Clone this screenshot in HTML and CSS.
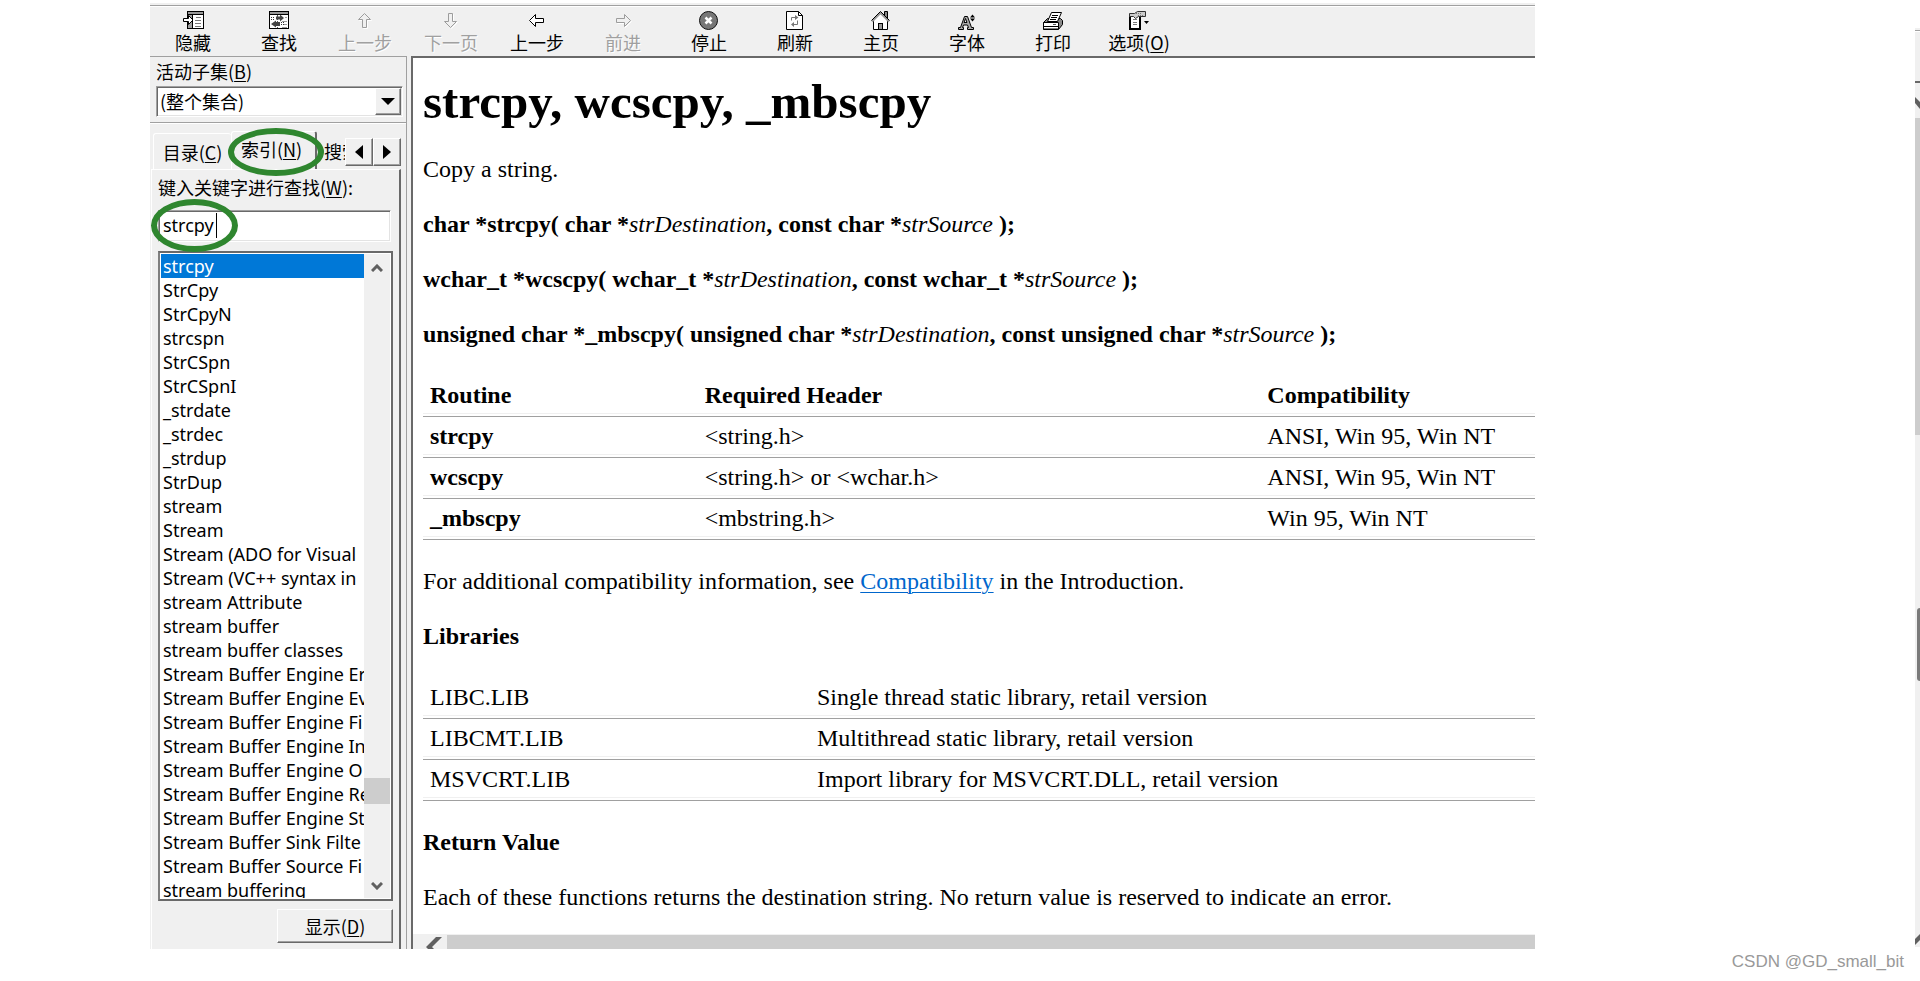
FILE: index.html
```html
<!DOCTYPE html>
<html lang="zh-CN">
<head>
<meta charset="utf-8">
<title>strcpy, wcscpy, _mbscpy</title>
<link rel="stylesheet" href="styles.css">
</head>
<body>
<div class="page">
<div class="stage">
<div class="window">
  <nav class="toolbar" aria-label="工具栏">
    <button class="tool" type="button">
      <svg class="icon" viewBox="0 0 24 20"><path d="M6 1h17v18H6z" fill="#000"/><path d="M7 2h15v2H7z" fill="#999"/><path d="M7 5h4v13H7z" fill="#a0a0a0"/><path d="M12 5h10v13H12z" fill="#fff"/><path d="M15 7.500h5M14 10.500h6M14 13.500h6M14 16h6" stroke="#777" fill="none"/><path class="smooth" d="M2.500 8.500h5v-3l4.500 4.500-4.500 4.500v-3h-5z" fill="#fff" stroke="#000"/></svg>
      <span>隐藏</span></button>
    <button class="tool" type="button">
      <svg class="icon" viewBox="0 0 24 20"><path d="M2 1h20v18H2z" fill="#000"/><path d="M3 2h18v2H3z" fill="#999"/><path d="M3 5h18v13H3z" fill="#fff"/><path d="M4 7.500h4M4 9.500h4M12 12.500h5M12 14.500h5" stroke="#333" stroke-dasharray="1 1"/><path d="M15 11.500h5M17 14.500h3M15 17h5M18 7.500h2" stroke="#999"/><path d="M10.500 5v13" stroke="#555" stroke-dasharray="2 1"/><path class="smooth" d="M9 6.500h4V4.500l4 3.500-4 3.500V9.500H9zM13 12H9v-1.500L4 14l5 3.500V16h4z" fill="#444"/></svg>
      <span>查找</span></button>
    <button class="tool" type="button" disabled>
      <svg class="icon" viewBox="0 0 24 20"><path class="smooth" d="M10.500 18.500v-8h-4l6-6 6 6h-4v8z" fill="none" stroke="#fff"/><path class="smooth" d="M9.500 17.500v-8h-4l6-6 6 6h-4v8z" fill="#f0f0f0" stroke="#9c9c9c"/></svg>
      <span>上一步</span></button>
    <button class="tool" type="button" disabled>
      <svg class="icon" viewBox="0 0 24 20"><path class="smooth" d="M10.500 4.500v8h-4l6 6 6-6h-4v-8z" fill="none" stroke="#fff"/><path class="smooth" d="M9.500 3.500v8h-4l6 6 6-6h-4v-8z" fill="#f0f0f0" stroke="#9c9c9c"/></svg>
      <span>下一页</span></button>
    <button class="tool" type="button">
      <svg class="icon" viewBox="0 0 24 20"><path class="smooth" d="M18.500 8.500h-8v-4l-6 6 6 6v-4h8z" fill="#fff" stroke="#000"/></svg>
      <span>上一步</span></button>
    <button class="tool" type="button" disabled>
      <svg class="icon" viewBox="0 0 24 20"><path class="smooth" d="M6.500 9.500h8v-4l6 6-6 6v-4h-8z" fill="none" stroke="#fff"/><path class="smooth" d="M5.500 8.500h8v-4l6 6-6 6v-4h-8z" fill="#f0f0f0" stroke="#9c9c9c"/></svg>
      <span>前进</span></button>
    <button class="tool" type="button">
      <svg class="icon" viewBox="0 0 24 20"><circle class="smooth" cx="11.500" cy="10.500" r="9" fill="#777" stroke="#111"/><path class="smooth" d="M8.500 7.500l6 6M14.500 7.500l-6 6" stroke="#fff" stroke-width="2.500"/></svg>
      <span>停止</span></button>
    <button class="tool" type="button">
      <svg class="icon" viewBox="0 0 24 20"><path class="smooth" d="M3.500 1.500h12l4 4v14h-16z" fill="#fff" stroke="#000"/><path class="smooth" d="M15.500 1.500v4h4" fill="none" stroke="#000"/><path class="smooth" d="M8.500 10.500V7.500h4M14.500 10.500v4h-4" fill="none" stroke="#777"/><path class="smooth" d="M12 5l3.500 2.500L12 10zM11 12l-3 2.500 3 2.500z" fill="#777"/></svg>
      <span>刷新</span></button>
    <button class="tool" type="button">
      <svg class="icon" viewBox="0 0 24 20"><path class="smooth" d="M15.500 1.500h3v8l-3-3z" fill="#888" stroke="#000"/><path class="smooth" d="M4.500 19.500V10L11.500 3l7 7v9.500z" fill="#fff" stroke="#000"/><path class="smooth" d="M3 11.500l8.500-8.500 8.500 8.500" fill="none" stroke="#999" stroke-width="2"/><path class="smooth" d="M2.500 10.500l9-9 9 9" fill="none" stroke="#000"/><path d="M9.500 19.500v-6h4v6z" fill="#999" stroke="#000"/></svg>
      <span>主页</span></button>
    <button class="tool" type="button">
      <svg class="icon" viewBox="0 0 24 20"><path class="smooth" d="M3.500 19.500v-2h2l4-11h3l4 11h2v2h-6v-2h1l-1-2.500h-4l-1 2.500h1v2zM9 12.500h3l-1.500-4z" fill="#aaa" stroke="#000" fill-rule="evenodd"/><path class="smooth" d="M15 7.500l2.500-3 2.500 3zM15 8.500l2.500 3 2.500-3z" fill="#000"/></svg>
      <span>字体</span></button>
    <button class="tool" type="button">
      <svg class="icon" viewBox="0 0 24 20"><path class="smooth" d="M2.500 12.500l4-4h13l2 2v4l-4 5h-15z" fill="#888" stroke="#000"/><path class="smooth" d="M6.500 11.500l4-9h10l-4 9z" fill="#fff" stroke="#000"/><path class="smooth" d="M11 5.500h6M10 7.500h6M9 9.500h6" stroke="#000"/><path class="smooth" d="M2.500 12.500h15v6.500h-15z" fill="#fff" stroke="#000"/><path d="M3 16.500h14" stroke="#000"/><path d="M12 14.500h3" stroke="#555"/></svg>
      <span>打印</span></button>
    <button class="tool" type="button">
      <svg class="icon" viewBox="0 0 24 20"><path d="M2 4h12v16H2z" fill="#000"/><path d="M4 6h8v12H4z" fill="#fff"/><path d="M6 9.500h4M6 12h4M6 14.500h4" stroke="#777"/><path class="smooth" d="M2.500 6.500v-3h5l3-2h8v5h-7l-3 2-2-2z" fill="#ccc" stroke="#333"/><path d="M9 3.500h6M11 5.500h5" stroke="#777" stroke-dasharray="1 1"/><path class="smooth" d="M17 11h5l-2.500 3z" fill="#000"/></svg>
      <span>选项(<u>O</u>)</span></button>
  </nav>

  <div class="split">
    <aside class="side">
      <div class="subset">
        <label for="subset">活动子集(<u>B</u>)</label>
        <div class="combo">
          <select id="subset"><option>(整个集合)</option></select>
          <span class="drop"><svg viewBox="0 0 14 7"><path d="M0 0h14L7 7z"/></svg></span>
        </div>
      </div>
      <div class="tabs" role="tablist">
        <button class="tab" type="button" role="tab">目录(<u>C</u>)</button>
        <button class="tab active" type="button" role="tab" aria-selected="true">索引(<u>N</u>)<span class="ring ring-tab"></span></button>
        <button class="tab cut" type="button" role="tab">搜索</button>
        <button class="spin" type="button" aria-label="向左"><svg viewBox="0 0 8 14"><path d="M8 0v14L0 7z"/></svg></button>
        <button class="spin" type="button" aria-label="向右"><svg viewBox="0 0 8 14"><path d="M0 0v14l8-7z"/></svg></button>
      </div>
      <section class="panel">
        <label for="keyword">键入关键字进行查找(<u>W</u>):</label>
        <div class="entry">
          <input id="keyword" type="text" value="strcpy">
          <span class="caret"></span>
          <span class="ring ring-entry"></span>
        </div>
        <div class="listbox">
          <ul class="items" role="listbox" aria-label="索引">
            <li class="on" role="option" aria-selected="true">strcpy</li>
            <li role="option">StrCpy</li>
            <li role="option">StrCpyN</li>
            <li role="option">strcspn</li>
            <li role="option">StrCSpn</li>
            <li role="option">StrCSpnI</li>
            <li role="option">_strdate</li>
            <li role="option">_strdec</li>
            <li role="option">_strdup</li>
            <li role="option">StrDup</li>
            <li role="option">stream</li>
            <li role="option">Stream</li>
            <li role="option">Stream (ADO for Visual</li>
            <li role="option">Stream (VC++ syntax in</li>
            <li role="option">stream Attribute</li>
            <li role="option">stream buffer</li>
            <li role="option">stream buffer classes</li>
            <li role="option">Stream Buffer Engine Er</li>
            <li role="option">Stream Buffer Engine Ev</li>
            <li role="option">Stream Buffer Engine Fi</li>
            <li role="option">Stream Buffer Engine In</li>
            <li role="option">Stream Buffer Engine O</li>
            <li role="option">Stream Buffer Engine Re</li>
            <li role="option">Stream Buffer Engine St</li>
            <li role="option">Stream Buffer Sink Filte</li>
            <li role="option">Stream Buffer Source Fi</li>
            <li role="option">stream buffering</li>
          </ul>
          <div class="vbar">
            <svg viewBox="0 0 12 8"><path d="M1 7l5-5 5 5"/></svg>
            <span class="thumb"></span>
            <svg viewBox="0 0 12 8"><path d="M1 1l5 5 5-5"/></svg>
          </div>
        </div>
        <button class="show" type="button">显示(<u>D</u>)</button>
      </section>
    </aside>

    <main class="view">
      <article class="doc">
        <h1>strcpy, wcscpy, _mbscpy</h1>
        <p>Copy a string.</p>
        <p><b>char *strcpy( char *</b><i>strDestination</i><b>, const char *</b><i>strSource</i> <b>);</b></p>
        <p><b>wchar_t *wcscpy( wchar_t *</b><i>strDestination</i><b>, const wchar_t *</b><i>strSource</i> <b>);</b></p>
        <p><b>unsigned char *_mbscpy( unsigned char *</b><i>strDestination</i><b>, const unsigned char *</b><i>strSource</i> <b>);</b></p>
        <table class="routines">
          <thead><tr><th>Routine</th><th>Required Header</th><th>Compatibility</th></tr></thead>
          <tbody>
            <tr><td><b>strcpy</b></td><td>&lt;string.h&gt;</td><td>ANSI, Win 95, Win NT</td></tr>
            <tr><td><b>wcscpy</b></td><td>&lt;string.h&gt; or &lt;wchar.h&gt;</td><td>ANSI, Win 95, Win NT</td></tr>
            <tr><td><b>_mbscpy</b></td><td>&lt;mbstring.h&gt;</td><td>Win 95, Win NT</td></tr>
          </tbody>
        </table>
        <p>For additional compatibility information, see <a href="#compat">Compatibility</a> in the Introduction.</p>
        <h2>Libraries</h2>
        <table class="libs">
          <tbody>
            <tr><td>LIBC.LIB</td><td>Single thread static library, retail version</td></tr>
            <tr><td>LIBCMT.LIB</td><td>Multithread static library, retail version</td></tr>
            <tr><td>MSVCRT.LIB</td><td>Import library for MSVCRT.DLL, retail version</td></tr>
          </tbody>
        </table>
        <h2>Return Value</h2>
        <p>Each of these functions returns the destination string. No return value is reserved to indicate an error.</p>
      </article>
      <div class="hbar">
        <svg viewBox="0 0 16 24"><path d="M10 0h6L6 10l10 10h-6L0 10z"/></svg>
        <span class="hthumb"></span>
      </div>
    </main>
  </div>
</div>

<div class="edge">
  <div class="edge-bar"></div>
  <svg class="edge-arrow" viewBox="0 0 5 35"><path d="M0 14l5 5v7l-5-6z"/></svg>
  <div class="edge-thumb"></div>
  <div class="edge-knob"></div>
  <svg class="edge-arrow" viewBox="0 0 5 35"><path d="M0 27l5-5v6l-5 5z"/></svg>
</div>
</div>
<footer class="credit">CSDN @GD_small_bit</footer>
</div>
</body>
</html>
```
FILE: styles.css
```css
* { box-sizing: border-box; }
body { margin: 0; background: #fff; color: #000; }
button, input, select {
  font: inherit; color: inherit; margin: 0; padding: 0;
  border: 0; border-radius: 0; background: none;
}
svg { display: block; flex: none; }
u { text-underline-offset: 2px; }

.page {
  height: 100vh; display: flex; flex-direction: column;
  font: 18px/24px "Noto Sans", "Noto Sans CJK SC", sans-serif;
}
.stage { flex: 1; min-height: 0; display: flex; padding-left: 150px; }
.window {
  flex: 1; min-width: 0; margin: 3px 380px 0 0;
  display: flex; flex-direction: column; overflow: hidden; background: #f0f0f0;
}

/* toolbar */
.toolbar {
  flex: none; display: flex; height: 51px; margin-top: 2px;
  border-top: 1px solid #a0a0a0; box-shadow: inset 0 1px #fff;
  font-family: "Noto Sans CJK SC", sans-serif;
}
.tool {
  width: 86px; flex: none; padding-top: 4px; white-space: nowrap;
  display: flex; flex-direction: column; align-items: center;
}
.tool:disabled { color: #a0a0a0; text-shadow: 1px 1px #fff; }
.icon { width: 24px; height: 20px; shape-rendering: crispEdges; }
.smooth { shape-rendering: auto; }

.split { flex: 1; min-height: 0; display: flex; }

/* navigation pane */
.side {
  flex: none; width: 257px; display: flex; flex-direction: column;
  border-top: 1px solid #a0a0a0; border-right: 1px solid #a0a0a0;
  font-family: "Noto Sans CJK SC", sans-serif;
}
.subset { padding: 2px 3px 5px 6px; border-bottom: 1px solid #a0a0a0; box-shadow: 0 1px #fff; }
.subset label { display: block; }
.combo {
  display: flex; height: 31px; margin-top: 3px; background: #fff;
  border: 1px solid #a0a0a0; border-right-color: #fff; border-bottom-color: #fff;
  box-shadow: inset 1px 1px #696969, inset -1px -1px #e3e3e3;
}
.combo select { flex: 1; min-width: 0; padding: 0 0 2px 3px; appearance: none; }
.drop, .spin, .show {
  display: flex; align-items: center; justify-content: center; background: #f0f0f0;
  border: 1px solid #fff; border-right-color: #696969; border-bottom-color: #696969;
  box-shadow: inset -1px -1px #a0a0a0;
}
.drop { width: 26px; margin: 1px; }
.drop svg { width: 14px; height: 7px; }

.tabs { flex: none; display: flex; align-items: flex-end; height: 46px; padding: 0 5px 0 3px; }
.tab {
  flex: none; width: 78px; height: 36px; position: relative;
  border: 1px solid #fff; border-width: 1px 0 0 1px; border-radius: 3px 3px 0 0;
}
.tab.active { width: 86px; height: 38px; padding: 0 4px 4px 0; border-right: 2px solid #696969; }
.tab.cut { flex: 1; min-width: 0; overflow: hidden; padding-left: 7px; text-align: left; border: 0; white-space: nowrap; }
.spin { width: 28px; height: 28px; margin-bottom: 3px; flex: none; }
.spin svg { width: 8px; height: 14px; }

.panel {
  flex: 1; min-height: 0; margin: 0 5px 0 1px; padding: 5px 6px 6px;
  display: flex; flex-direction: column;
  border: 1px solid #fff; border-right: 2px solid #696969; border-bottom: 0;
}
.panel label { margin-bottom: 11px; white-space: nowrap; }
.entry {
  position: relative; flex: none; height: 32px; background: #fff; margin-right: 2px;
  border: 1px solid #a0a0a0; border-right-color: #fff; border-bottom-color: #fff;
  box-shadow: inset 1px 1px #696969, inset -1px -1px #e3e3e3;
}
.entry input { width: 100%; height: 100%; padding: 0 0 2px 4px; font-family: "Noto Sans", sans-serif; outline: 0; }
.caret { position: absolute; left: 57px; top: 2px; width: 1px; height: 25px; background: #000; }
.ring { position: absolute; border: 6px solid #2f862f; border-radius: 50%; pointer-events: none; }
.ring-tab { left: -4px; top: -4px; width: 96px; height: 48px; }
.ring-entry { left: -8px; top: -12px; width: 87px; height: 53px; }

.listbox {
  flex: 1; min-height: 0; display: flex; margin-top: 9px; padding: 1px;
  background: #fff; border: 2px solid #696969; border-left-color: #808080;
}
.items {
  flex: 1; min-width: 0; margin: 0; padding: 0; overflow: hidden; list-style: none;
  font-family: "Noto Sans", sans-serif;
}
.items li { height: 24px; padding-left: 2px; white-space: nowrap; overflow: hidden; }
.items .on { background: #0078d7; color: #fff; }
.vbar {
  flex: none; width: 26px; padding: 10px 0 8px; background: #f0f0f0;
  display: grid; grid-template-rows: 8px 1fr 8px; justify-items: center;
}
.vbar svg { width: 12px; height: 8px; fill: none; stroke: #606060; stroke-width: 3; }
.vbar .thumb { width: 100%; height: 26px; background: #cdcdcd; align-self: end; margin-bottom: 78px; }
.show { flex: none; align-self: flex-end; width: 116px; height: 34px; margin-top: 8px; }

/* topic pane */
.view {
  flex: 1; min-width: 0; margin-left: 4px; background: #fff;
  display: flex; flex-direction: column;
  border-left: 2px solid #696969; border-top: 2px solid #696969;
}
.doc {
  flex: 1; min-height: 0; overflow: hidden; padding-left: 10px;
  font: 24px/27px "Liberation Serif", serif; white-space: nowrap;
}
.doc h1 { margin: 16px 0 26px; font-size: 49px; line-height: 56px; }
.doc h2 { margin: 28px 0; font-size: 24px; line-height: 27px; }
.doc p { margin: 0 0 28px; }
.doc a { color: #0066cc; text-decoration-thickness: 1px; text-underline-offset: 3px; }
.doc table { width: 100%; table-layout: fixed; border-spacing: 0; margin-bottom: 28px; }
.doc th, .doc td {
  height: 41px; padding: 0 7px 1px; text-align: left;
  border-bottom: 1px solid #a0a0a0; box-shadow: inset 0 -2px #fff, inset 0 -3px #f0f0f0;
}
.routines th:nth-child(1) { width: 24.700%; }
.routines th:nth-child(2) { width: 50.600%; }
.libs td:first-child { width: 34.800%; }
.hbar { flex: none; height: 15px; display: flex; gap: 5px; padding-left: 13px; background: #f0f0f0; overflow: hidden; }
.hbar svg { width: 16px; height: 24px; margin-top: 3px; fill: #606060; }
.hthumb { flex: 1; background: #cdcdcd; margin-top: 1px; }

/* sliver of the neighbouring window */
.edge { flex: none; width: 5px; margin: 28px 0 2px; display: flex; flex-direction: column; background: #f0f0f0; }
.edge-bar { height: 55px; border-bottom: 2px solid #696969; box-shadow: inset 0 2px #f0f0f0, inset 0 3px #a0a0a0, inset 0 4px #fff; }
.edge-arrow { width: 5px; height: 35px; fill: #606060; }
.edge-thumb { height: 317px; background: #cdcdcd; }
.edge-knob { height: 73px; margin: 173px 0 auto 2px; background: #7a7a7a; border-radius: 4px 0 0 4px; }

.credit {
  flex: none; height: 32px; padding-right: 16px; text-align: right;
  font: 17px/26px "Liberation Sans", sans-serif; color: #999;
}
```
